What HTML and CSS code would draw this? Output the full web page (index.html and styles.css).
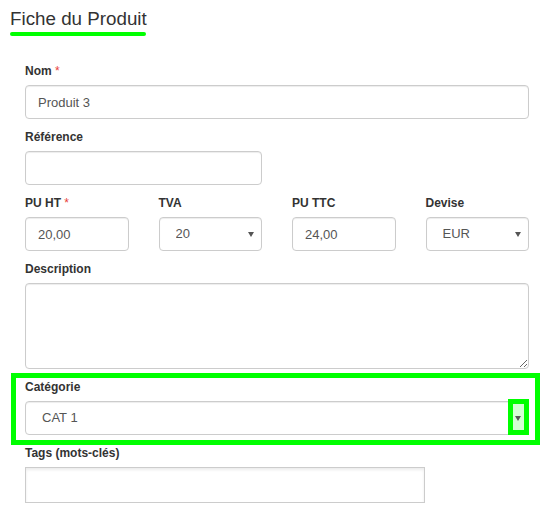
FILE: index.html
```html
<!DOCTYPE html>
<html lang="fr">
<head>
<meta charset="utf-8">
<title>Fiche du Produit</title>
<link rel="stylesheet" href="styles.css">
</head>
<body>
<div class="page">
  <h1 class="title">Fiche du Produit</h1>
  <div class="title-underline"></div>

  <form class="form">
    <div class="row">
      <div class="col col-12 form-group">
        <label class="label">Nom <span class="req">*</span></label>
        <input class="form-control" type="text" value="Produit 3">
      </div>
    </div>
    <div class="row">
      <div class="col col-6 form-group">
        <label class="label">Référence</label>
        <input class="form-control" type="text" value="">
      </div>
    </div>
    <div class="row">
      <div class="col col-3 form-group">
        <label class="label">PU HT <span class="req">*</span></label>
        <input class="form-control" type="text" value="20,00">
      </div>
      <div class="col col-3 form-group">
        <label class="label">TVA</label>
        <span class="select-wrap">
          <select class="form-control select"><option>20</option></select>
        </span>
      </div>
      <div class="col col-3 form-group">
        <label class="label">PU TTC</label>
        <input class="form-control" type="text" value="24,00">
      </div>
      <div class="col col-3 form-group">
        <label class="label">Devise</label>
        <span class="select-wrap">
          <select class="form-control select"><option>EUR</option></select>
        </span>
      </div>
    </div>
    <div class="row">
      <div class="col col-12 form-group">
        <label class="label">Description</label>
        <textarea class="form-control textarea"></textarea>
      </div>
    </div>
    <div class="row">
      <div class="col col-12 form-group highlight-group">
        <div class="highlight-box"></div>
        <label class="label">Catégorie</label>
        <span class="select-wrap">
          <select class="form-control select"><option>CAT 1</option></select>
          <span class="arrow-highlight"></span>
        </span>
      </div>
    </div>
    <div class="row">
      <div class="col col-12 form-group">
        <label class="label">Tags (mots-clés)</label>
        <div class="tags-input"></div>
      </div>
    </div>
  </form>
</div>
</body>
</html>
```

FILE: styles.css
```css
* { box-sizing: border-box; }

html, body {
  margin: 0;
  padding: 0;
  background: #fff;
}

body {
  font-family: "Liberation Sans", Arial, sans-serif;
  color: #333;
  width: 559px;
  height: 513px;
  overflow: hidden;
}

.page {
  padding-top: 8px;
}

.title {
  margin: 0;
  padding-left: 10px;
  font-size: 18.8px;
  line-height: 22px;
  font-weight: normal;
  color: #333;
}

.title-underline {
  margin: 2px 0 0 10px;
  width: 136px;
  height: 4px;
  border-radius: 2px;
  background: #00ff00;
}

.form {
  margin: 27px 0 0 0;
}

.row {
  display: flex;
  width: 534px;
  margin-left: 10px;
}

.col {
  padding: 0 15px;
}

.col-12 { width: 534px; }
.col-6 { width: 267px; }
.col-3 { width: 133.5px; }

.form-group {
  margin-bottom: 10px;
}

.label {
  display: block;
  font-size: 12px;
  font-weight: bold;
  line-height: 17px;
  margin-bottom: 5px;
  color: #333;
}

.req {
  color: #e8413a;
  font-weight: normal;
}

.form-control {
  display: block;
  width: 100%;
  height: 34px;
  margin: 0;
  padding: 6px 12px;
  font-family: "Liberation Sans", Arial, sans-serif;
  font-size: 13px;
  line-height: 20px;
  color: #555;
  background: #fff;
  border: 1px solid #ccc;
  border-radius: 4px;
  box-shadow: inset 0 1px 1px rgba(0, 0, 0, 0.075);
  outline: none;
}

.textarea {
  height: 86px;
  resize: vertical;
}

.select-wrap {
  position: relative;
  display: block;
}

.select {
  -webkit-appearance: none;
  appearance: none;
  padding-left: 16px;
  padding-right: 24px;
}

.select-wrap::after {
  content: "";
  position: absolute;
  right: 8px;
  top: 15px;
  width: 0;
  height: 0;
  border-left: 3px solid transparent;
  border-right: 3px solid transparent;
  border-top: 5px solid #555;
  pointer-events: none;
}

.highlight-group {
  position: relative;
}

.highlight-box {
  position: absolute;
  left: 1px;
  top: -6px;
  width: 529px;
  height: 72px;
  border: 5px solid #00ff00;
  pointer-events: none;
}

.arrow-highlight {
  position: absolute;
  left: 483px;
  top: -2px;
  width: 21px;
  height: 36px;
  border: 5px solid #00ff00;
  background: rgba(0, 255, 0, 0.17);
  pointer-events: none;
}

.tags-input {
  width: 400px;
  height: 36px;
  border: 1px solid #ccc;
  background: #fff;
  box-shadow: inset 0 2px 3px rgba(0, 0, 0, 0.08);
}
```
